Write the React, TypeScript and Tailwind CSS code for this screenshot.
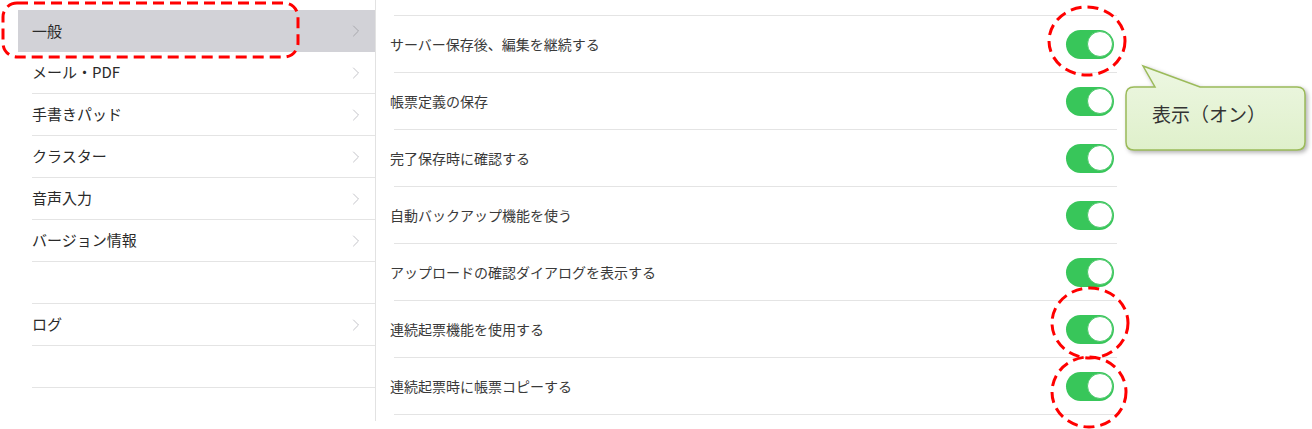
import { ChevronRight } from "lucide-react";

const menu = [
  { label: "一般", selected: true },
  { label: "メール・PDF" },
  { label: "手書きパッド" },
  { label: "クラスター" },
  { label: "音声入力" },
  { label: "バージョン情報" },
  { label: "" },
  { label: "ログ" },
  { label: "" },
];

const settings = [
  "サーバー保存後、編集を継続する",
  "帳票定義の保存",
  "完了保存時に確認する",
  "自動バックアップ機能を使う",
  "アップロードの確認ダイアログを表示する",
  "連続起票機能を使用する",
  "連続起票時に帳票コピーする",
];

function Toggle() {
  return (
    <div className="flex h-[29px] w-[48px] items-center justify-end rounded-full bg-[#38c65a] p-[1.5px]">
      <div className="h-[26px] w-[26px] rounded-full border border-[#4cc86a] bg-white" />
    </div>
  );
}

export default function App() {
  return (
    <div
      className="relative h-[429px] w-[1312px] overflow-hidden bg-white text-[#333]"
      style={{ fontFamily: '"Noto Sans CJK JP", "Noto Sans", sans-serif' }}
    >
      <div className="flex">
        {/* left menu */}
        <div className="h-[421px] w-[376px] border-r border-[#e2e2e2] pt-[10px] pl-[18px]">
          {menu.map((m, i) =>
            m.selected ? (
              <div key={i} className="flex h-[42px] items-center justify-between bg-[#d2d2d7] pl-[14px] pr-[9px]">
                <span className="text-[15px] text-[#2a2a2a]">{m.label}</span>
                <ChevronRight size={20} strokeWidth={1.2} className="text-[#a8a8ad]" />
              </div>
            ) : (
              <div key={i} className="ml-[14px] flex h-[42px] items-center justify-between border-b border-[#e4e4e4] pr-[9px]">
                <span className="text-[15px] text-[#2a2a2a]">{m.label}</span>
                {m.label && <ChevronRight size={20} strokeWidth={1.2} className="text-[#c4c4c9]" />}
              </div>
            )
          )}
        </div>

        {/* right settings */}
        <div className="w-[741px] pt-[15px] pl-[14px]">
          <div className="ml-[4px] h-px bg-[#e4e4e4]" />
          {settings.map((s) => (
            <div key={s}>
              <div className="flex h-[56px] items-center justify-between pr-[3px]">
                <span className="text-[14px] text-[#3a3a3a]">{s}</span>
                <Toggle />
              </div>
              <div className="ml-[4px] h-px bg-[#e4e4e4]" />
            </div>
          ))}
        </div>
      </div>

      {/* annotations */}
      <svg className="pointer-events-none absolute left-0 top-0" width="1312" height="429">
        <rect x="3" y="3" width="295" height="54" rx="14" fill="none" stroke="#f00" strokeWidth="3" strokeDasharray="11 6" />
        <ellipse cx="1087" cy="41" rx="38" ry="34" fill="none" stroke="#f00" strokeWidth="3" strokeDasharray="11 6" />
        <ellipse cx="1090" cy="323" rx="38" ry="35" fill="none" stroke="#f00" strokeWidth="3" strokeDasharray="11 6" />
        <ellipse cx="1089" cy="392" rx="37" ry="35" fill="none" stroke="#f00" strokeWidth="3" strokeDasharray="11 6" />
      </svg>

      <div className="absolute left-[1120px] top-[60px] h-[100px] w-[192px]">
        <svg width="192" height="100" className="absolute left-0 top-0" style={{ filter: "drop-shadow(2px 2px 2px rgba(0,0,0,0.3))" }}>
          <defs>
            <linearGradient id="bub" x1="0" y1="0" x2="0" y2="1">
              <stop offset="0" stopColor="#edf7e2" />
              <stop offset="1" stopColor="#dff0cb" />
            </linearGradient>
          </defs>
          <path
            d="M14 27 L35 27 L23 6 L80 27 L177 27 Q185 27 185 35 L185 82 Q185 90 177 90 L14 90 Q6 90 6 82 L6 35 Q6 27 14 27 Z"
            fill="url(#bub)"
            stroke="#9bbb59"
            strokeWidth="1.5"
          />
        </svg>
        <span className="absolute left-[32px] top-[44px] text-[19px] leading-none text-[#333]">表示（オン）</span>
      </div>
    </div>
  );
}
